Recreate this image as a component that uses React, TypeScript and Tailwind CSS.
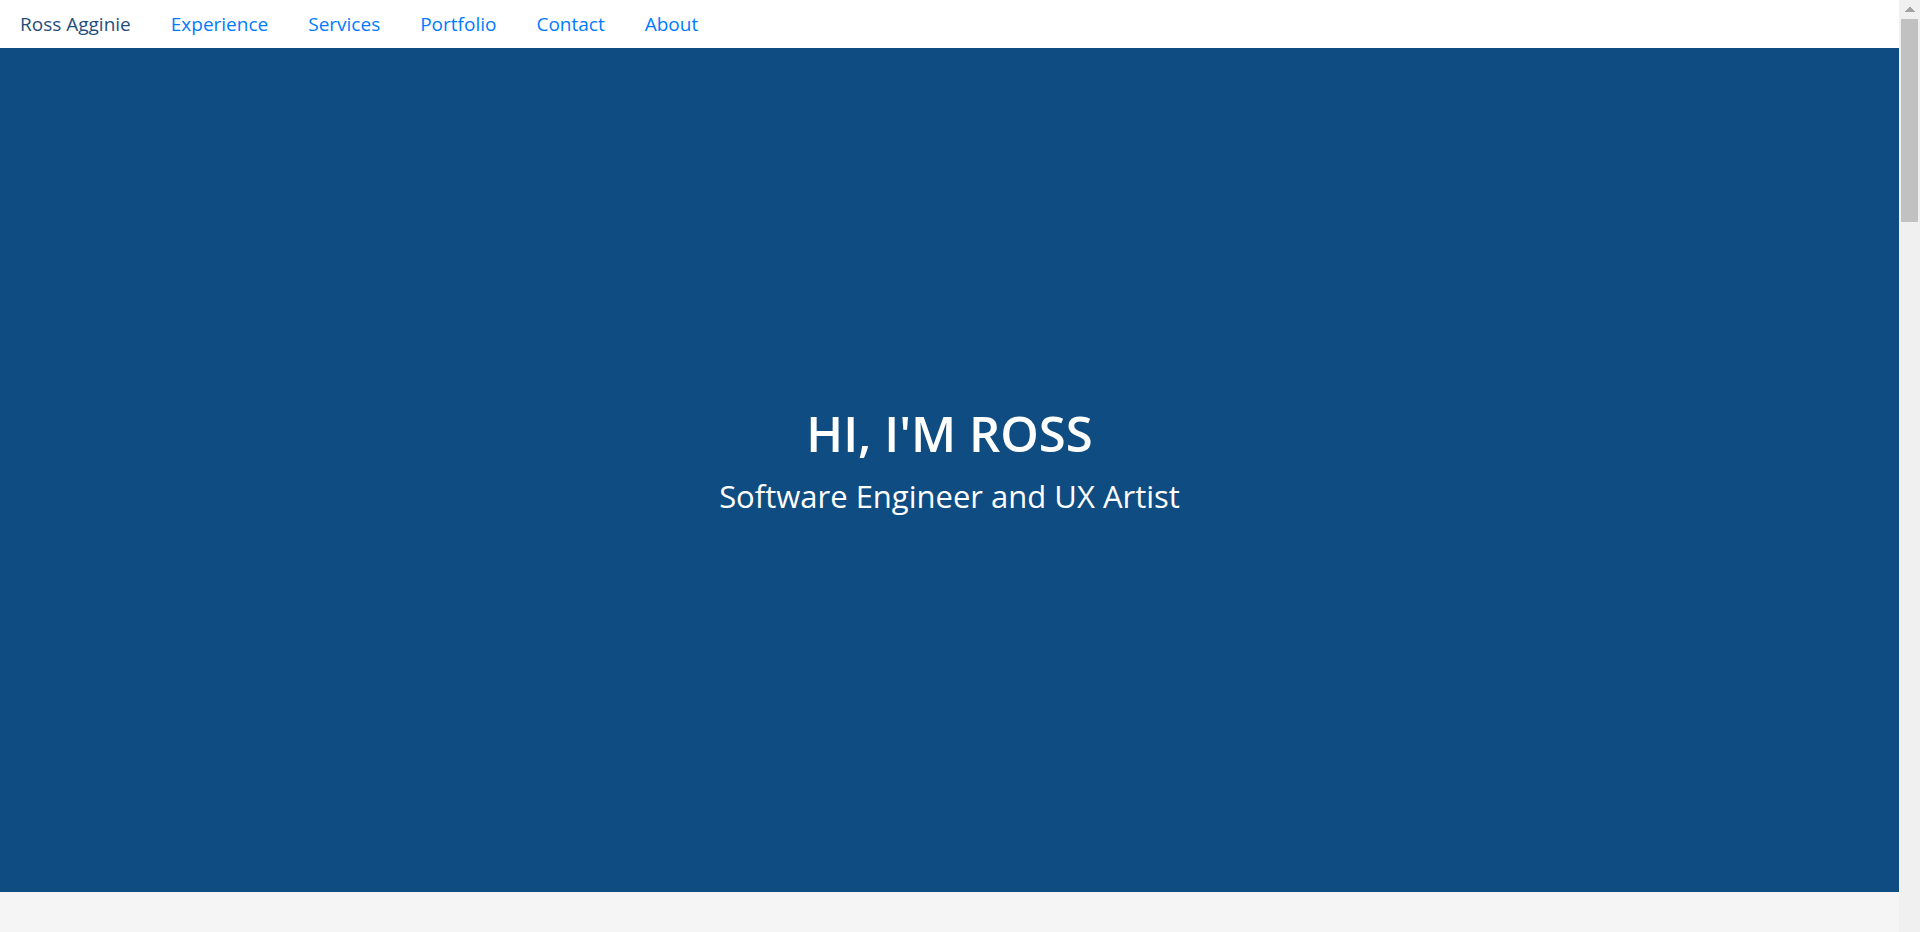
const links = ["Experience", "Services", "Portfolio", "Contact", "About"];

function Navigation() {
  return (
    <nav className="flex h-12 shrink-0 items-center bg-white text-[19px] leading-6">
      <a href="#home" className="px-5 text-[#1f4e7c]">
        Ross Agginie
      </a>
      {links.map((name) => (
        <a key={name} href={"#" + name.toLowerCase()} className="px-5 text-[#007bff]">
          {name}
        </a>
      ))}
    </nav>
  );
}

function Hero() {
  return (
    <header
      id="home"
      className="flex flex-1 flex-col items-center justify-center gap-2 bg-[#0f4c81] pb-[18px] text-center text-white"
    >
      <h1 className="text-[49px] leading-[62px] font-semibold">HI, I'M ROSS</h1>
      <p className="text-[31px] leading-[48px]">Software Engineer and UX Artist</p>
    </header>
  );
}

function ScrollTrack() {
  return (
    <div aria-hidden="true" className="flex w-[21px] shrink-0 flex-col items-center bg-[#f0f0f0]">
      <div className="flex h-[19px] items-center">
        <svg width="10" height="5" viewBox="0 0 10 5" fill="#a3a3a3">
          <path d="M4 0H6V1H7V2H8V3H9V4H10V5H0V4H1V3H2V2H3V1H4Z" />
        </svg>
      </div>
      <div className="h-[203px] w-[17px] bg-[#c1c1c1]" />
    </div>
  );
}

export default function App() {
  return (
    <div className="flex min-h-screen font-['Open_Sans','Noto_Sans',sans-serif]">
      <div className="flex min-w-0 flex-1 flex-col">
        <Navigation />
        <Hero />
        <section id="experience" className="h-10 shrink-0 bg-[#f5f5f5]" />
      </div>
      <ScrollTrack />
    </div>
  );
}
